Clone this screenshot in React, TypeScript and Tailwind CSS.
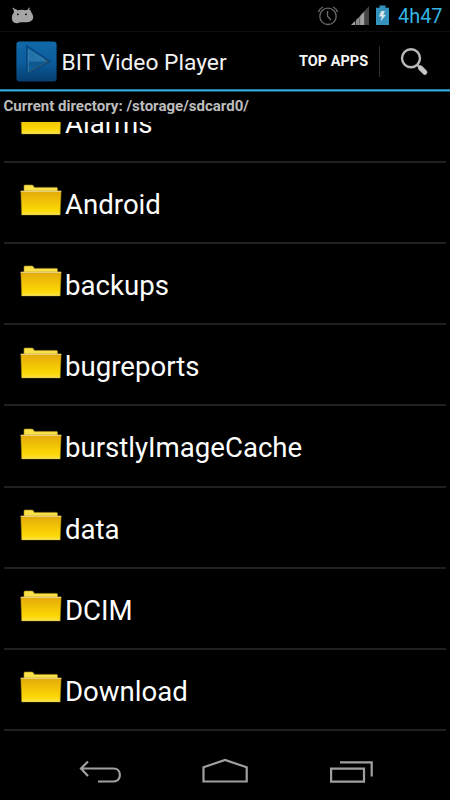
const folders = ['Alarms', 'Android', 'backups', 'bugreports', 'burstlyImageCache', 'data', 'DCIM', 'Download'];

function Folder() {
  return (
    <svg width="42" height="32" viewBox="0 0 42 32" className="block shrink-0">
      <defs>
        <linearGradient id="front" x1="0" y1="0" x2="0" y2="1">
          <stop offset="0" stopColor="#e2a90c" />
          <stop offset=".3" stopColor="#edbb08" />
          <stop offset=".78" stopColor="#fcd704" />
          <stop offset="1" stopColor="#fde43a" />
        </linearGradient>
      </defs>
      <path d="M4 8V2Q4 1 5 1H12Q13 1 13.5 2L14.4 3.4H36.5Q37.5 3.4 37.5 4.7V9H4Z" fill="#fbe148" stroke="#a88d20" strokeWidth=".6" />
      <path d="M.8 7.1H41.2L40.2 31H1.6Z" fill="url(#front)" stroke="#8b7010" strokeWidth=".5" />
      <path d="M.8 7.3H41.2" stroke="#e9cf78" strokeWidth="1.2" />
      <path d="M2 30.2H40" stroke="#f5e060" strokeWidth=".8" />
    </svg>
  );
}

function StatusBar() {
  return (
    <div className="flex h-8 shrink-0 items-start justify-between border-b border-[#101010]">
      <svg width="40" height="31" viewBox="0 0 40 31">
        <path d="M14.3 9.5L12.8 8M28.2 10L29.5 7.7" stroke="#a5a5a5" strokeWidth="1.1" />
        <path d="M14 9.3Q15.5 8.6 17.5 10.2Q22 9.2 25.8 10.3Q28 8.9 30 9.9Q31.3 11 31.4 12.5Q34.3 16.3 32.5 19.8Q30.5 22.6 26.5 22.2H20Q17.5 24 14.3 22.8Q11.8 21.5 11.8 18Q12 14.5 14 12.3Q13.2 10.5 14 9.3Z" fill="#a5a5a5" />
        <circle cx="17.9" cy="14.3" r=".9" fill="#000" />
        <circle cx="26" cy="14.3" r=".9" fill="#000" />
      </svg>
      <div className="flex">
        <svg width="80" height="31" viewBox="312 0 80 31">
          <g fill="none" stroke="#696969" strokeWidth="1.3">
            <circle cx="328" cy="16.3" r="8.2" />
            <path d="M327.5 11V16.2L331 20M318.5 12Q319.5 8.5 323 7M333 7Q336.5 8.5 337.5 12" />
          </g>
          <path d="M351 25L355.3 20.8V25Z" fill="#a4a4a4" />
          <path d="M356 25V20L359.8 16.2V25Z" fill="#8b8b8b" />
          <path d="M360 25V16L364.5 11.2V25Z" fill="#a4a4a4" />
          <path d="M364.5 25V11.2L369 6V25Z" fill="#464646" />
          <path d="M360 25V16M364.4 25V11.3" stroke="#666" strokeWidth=".5" />
          <path d="M379.5 5.5H385.5V7.8H389V25H376V7.8H379.5Z" fill="#3393bd" />
          <path d="M381.2 11H385L383.2 14.7H386L380.6 21.4L381.8 16.6H379Z" fill="#d8e5e9" />
        </svg>
        <span className="mt-[5px] ml-[6px] h-6 w-[52px] whitespace-nowrap text-[19.9px] leading-6 text-[#33b5e5]">4h47</span>
      </div>
    </div>
  );
}

function ActionBar() {
  return (
    <header className="shrink-0">
      <div className="flex h-[57px] items-center pt-px pl-4">
        <svg width="41" height="41" viewBox="0 0 41 41" className="shrink-0">
          <defs>
            <linearGradient id="app" x1="0" y1="0" x2="0" y2="1">
              <stop offset="0" stopColor="#1269a9" />
              <stop offset=".55" stopColor="#0b5b9b" />
              <stop offset="1" stopColor="#063e70" />
            </linearGradient>
            <linearGradient id="play" x1="0" y1="0" x2="0" y2="1">
              <stop offset="0" stopColor="#1e6ea8" />
              <stop offset=".5" stopColor="#2676ab" />
              <stop offset=".54" stopColor="#0d558f" />
              <stop offset="1" stopColor="#126197" />
            </linearGradient>
          </defs>
          <rect x=".4" y=".4" width="40.2" height="40" rx="3.2" fill="url(#app)" />
          <path d="M10.8 5L34 20.5L11 33Z" fill="none" stroke="#07457d" strokeWidth="1.5" />
          <path d="M12.3 8.7L32 20.5L12.3 31.5Z" fill="url(#play)" stroke="#4586aa" strokeWidth=".8" />
          <path d="M12.5 31.5L32.6 20.5L28.5 18" fill="none" stroke="#244c6b" strokeWidth="1.2" />
        </svg>
        <h1 className="mt-[3px] ml-[4.5px] w-[237.5px] whitespace-nowrap text-[22.8px] leading-8 text-[#f2f2f2]">BIT Video Player</h1>
        <span className="w-[81px] whitespace-nowrap border-r border-[#303030] pt-px text-[14.5px] leading-[30px] font-bold text-[#f5f5f5]">TOP APPS</span>
        <svg width="30" height="32" viewBox="0 0 30 32" className="mt-[3px] ml-5">
          <path d="M17.5 18L20 20.5" stroke="#a9a9a9" strokeWidth="2.5" />
          <path d="M20.5 21L24.8 25.3" stroke="#c5c5c5" strokeWidth="5" strokeLinecap="round" />
          <circle cx="11" cy="11.2" r="9" fill="none" stroke="#b8b8b8" strokeWidth="2.4" />
        </svg>
      </div>
      <div className="h-px bg-[#1f7899]" />
      <div className="h-px bg-[#33b5e5]" />
      <div className="h-px bg-[#14495c]" />
    </header>
  );
}

function NavigationBar() {
  return (
    <nav className="mt-auto flex h-14 shrink-0 items-center justify-center">
      <svg width="340" height="56" viewBox="55 744 340 56" fill="none" stroke="#a0a0a0" strokeWidth="2.2">
        <path d="M88 761.5L81 768.5L88 776M81 768.5H113.5C122 768.5 122 781.5 113.5 781.5H98" />
        <path d="M203.5 781.5V767.3L225 760L246.7 767.3V781.5Z" />
        <path d="M331.1 768.6H364V781.6H331.1ZM340 762.4H371.7V776.5" />
      </svg>
    </nav>
  );
}

export default function App() {
  return (
    <div className="flex h-[800px] w-[450px] flex-col overflow-hidden bg-black font-[Roboto,sans-serif]">
      <StatusBar />
      <ActionBar />
      <div className="h-[30px] shrink-0 pt-[4px] pl-[3.5px] whitespace-nowrap text-[15.05px] leading-5 font-bold text-[#bcbcbc]">Current directory: /storage/sdcard0/</div>
      <main className="h-[616px] shrink-0 overflow-hidden px-1">
        <ul className="-mt-[40.4px]">
          {folders.map((name) => (
            <li key={name} className="flex h-[81.2px] items-start border-b-2 border-[#202020] pt-[21.4px] pl-[16px]">
              <Folder />
              <span className="ml-[3px] mt-[4.6px] whitespace-nowrap text-[27.6px] leading-8 text-white">{name}</span>
            </li>
          ))}
        </ul>
      </main>
      <NavigationBar />
    </div>
  );
}
